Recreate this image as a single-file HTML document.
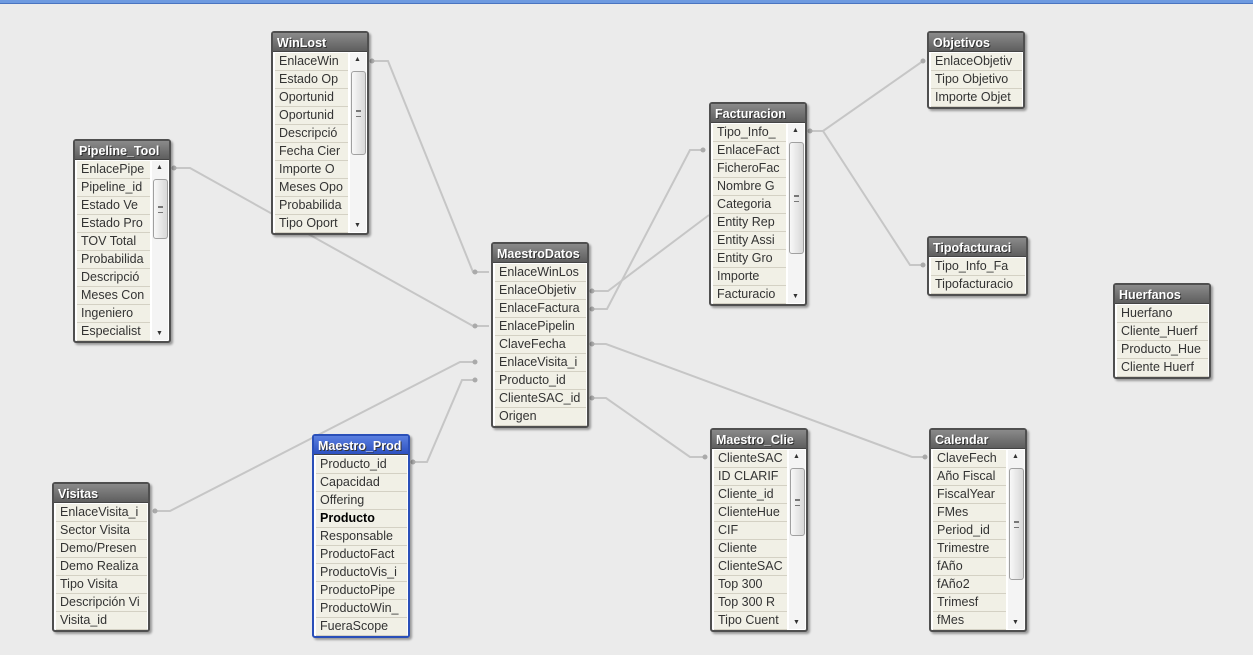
<!DOCTYPE html>
<html><head><meta charset="utf-8"><style>
body{margin:0;width:1253px;height:655px;background:#ebebeb;position:relative;overflow:hidden;font-family:"Liberation Sans",Tahoma,sans-serif}
.top{position:absolute;left:0;top:0;width:1253px;height:3px;background:#6e9ae0;border-bottom:1px solid #4a74c0}
.box{position:absolute;border:2px solid #4f4f4f;border-radius:3px;background:#fff;box-shadow:2px 2px 2px rgba(0,0,0,.35);box-sizing:border-box}
.hd{height:18px;background:linear-gradient(#8a8a8a,#5e5e5e);color:#fff;font-weight:bold;font-size:12.5px;line-height:20px;padding-left:4px;white-space:nowrap;overflow:hidden;text-shadow:1px 1px 0 #333;border-bottom:1px solid #444}
.blue{border-color:#2a4fb8}.blue .hd{background:linear-gradient(#5a7fe0,#2c50c0)}
.bd{position:relative;padding:1px 1px 0 2px}
.c{height:17px;border-bottom:1px solid #d4d1c4;background:#f1f0e6;font-size:12.5px;line-height:17px;padding-left:4px;color:#333;white-space:nowrap;overflow:hidden}
.sb{position:absolute;right:1px;top:1px;width:16px;bottom:1px;background:#f4f4f4}
.th{position:absolute;left:1px;width:13px;border:1px solid #a0a0a0;border-radius:3px;background:linear-gradient(90deg,#f8f8f8,#d8d8d8)}
.th:after{content:"";position:absolute;left:4px;top:50%;width:5px;height:5px;margin-top:-3px;border-top:1px solid #777;border-bottom:1px solid #777;box-shadow:inset 0 2px 0 -1px #777}
.ar{position:absolute;left:4px;font-size:7px;color:#333}
svg{position:absolute;left:0;top:0}
</style></head><body><div class="top"></div>
<svg width="1253" height="655" fill="none" stroke="#c6c6c6" stroke-width="2">
<path d="M372 61H388L473 272H489"/>
<path d="M174 168H190L473 326H489"/>
<path d="M592 291H608L709 215"/>
<path d="M592 309H607L690 150H703"/>
<path d="M810 131H823L923 61"/>
<path d="M810 131H823L910 265H925"/>
<path d="M473 362H460L170 511H155"/>
<path d="M473 380H462L427 462H413"/>
<path d="M592 344H606L912 457H925"/>
<path d="M592 398H606L690 457H705"/>
<g fill="#aaa" stroke="none">
<circle cx="372" cy="61" r="2.5"/><circle cx="174" cy="168" r="2.5"/><circle cx="475" cy="272" r="2.5"/><circle cx="475" cy="326" r="2.5"/>
<circle cx="592" cy="291" r="2.5"/><circle cx="592" cy="309" r="2.5"/><circle cx="703" cy="150" r="2.5"/><circle cx="810" cy="131" r="2.5"/>
<circle cx="923" cy="61" r="2.5"/><circle cx="923" cy="265" r="2.5"/><circle cx="475" cy="362" r="2.5"/><circle cx="475" cy="380" r="2.5"/>
<circle cx="155" cy="511" r="2.5"/><circle cx="413" cy="462" r="2.5"/><circle cx="592" cy="344" r="2.5"/><circle cx="592" cy="398" r="2.5"/>
<circle cx="925" cy="457" r="2.5"/><circle cx="705" cy="457" r="2.5"/>
</g></svg>
<div id="root"></div>
<script>
var B=[
["WinLost",271,31,98,["EnlaceWin","Estado Op","Oportunid","Oportunid","Descripció","Fecha Cier","Importe O","Meses Opo","Probabilida","Tipo Oport"],[18,82]],
["Pipeline_Tool",73,139,98,["EnlacePipe","Pipeline_id","Estado Ve","Estado Pro","TOV Total","Probabilida","Descripció","Meses Con","Ingeniero","Especialist"],[18,58]],
["MaestroDatos",491,242,98,["EnlaceWinLos","EnlaceObjetiv","EnlaceFactura","EnlacePipelin","ClaveFecha","EnlaceVisita_i","Producto_id","ClienteSAC_id","Origen"],null],
["Facturacion",709,102,98,["Tipo_Info_","EnlaceFact","FicheroFac","Nombre G","Categoria","Entity Rep","Entity Assi","Entity Gro","Importe","Facturacio"],[18,110]],
["Objetivos",927,31,98,["EnlaceObjetiv","Tipo Objetivo","Importe Objet"],null],
["Tipofacturaci",927,236,101,["Tipo_Info_Fa","Tipofacturacio"],null],
["Huerfanos",1113,283,98,["Huerfano","Cliente_Huerf","Producto_Hue","Cliente Huerf"],null],
["Calendar",929,428,98,["ClaveFech","Año Fiscal","FiscalYear","FMes","Period_id","Trimestre","fAño","fAño2","Trimesf","fMes"],[18,110]],
["Maestro_Clie",710,428,98,["ClienteSAC","ID CLARIF","Cliente_id","ClienteHue","CIF","Cliente","ClienteSAC","Top 300","Top 300 R","Tipo Cuent"],[18,66]],
["Maestro_Prod",312,434,98,["Producto_id","Capacidad","Offering","Producto","Responsable","ProductoFact","ProductoVis_i","ProductoPipe","ProductoWin_","FueraScope"],null,1],
["Visitas",52,482,98,["EnlaceVisita_i","Sector Visita","Demo/Presen","Demo Realiza","Tipo Visita","Descripción Vi","Visita_id"],null]];
var h="";
B.forEach(function(b){
h+='<div class="box'+(b[6]?' blue':'')+'" style="left:'+b[1]+'px;top:'+b[2]+'px;width:'+b[3]+'px"><div class="hd">'+b[0]+'</div><div class="bd"'+(b[5]?' style="padding-right:19px"':'')+'>';
b[4].forEach(function(t){h+='<div class="c"'+(b[6]&&t=="Producto"?' style="font-weight:bold;color:#000"':'')+'>'+t+'</div>';});
if(b[5])h+='<div class="sb"><span class="ar" style="top:3px">&#9650;</span><div class="th" style="top:'+b[5][0]+'px;height:'+b[5][1]+'px"></div><span class="ar" style="bottom:3px">&#9660;</span></div>';
h+='</div></div>';});
document.getElementById("root").innerHTML=h;
</script>
</body></html>
